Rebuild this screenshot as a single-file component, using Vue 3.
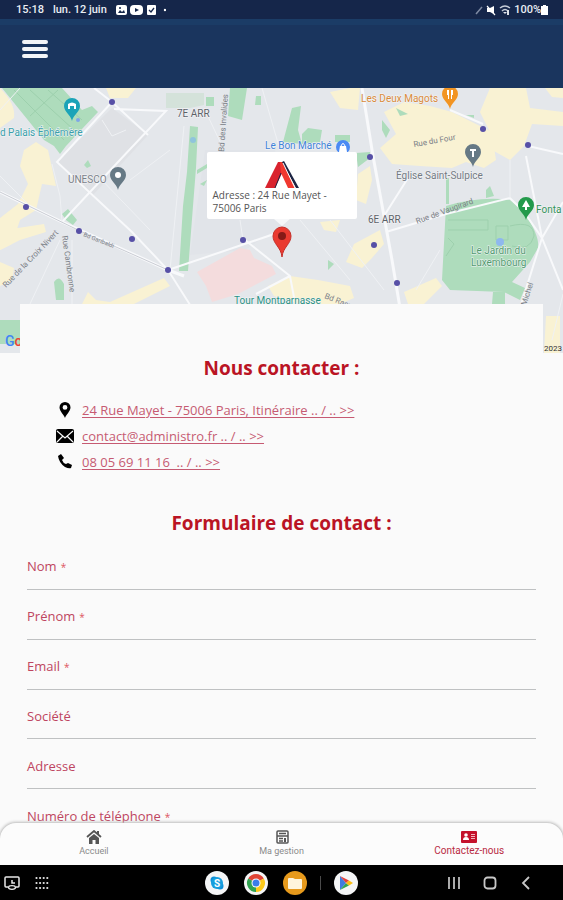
<template>
  <div class="screen">
    <div class="status-bar">
      <span>15:18</span>
      <span class="status-date">lun. 12 juin</span>
      <svg width="50" height="12" viewBox="0 0 50 12" aria-hidden="true">
        <rect x="0" y="1" width="11" height="10" rx="2" fill="#fff" />
        <path d="M2 9 L4 6 L6 8 L8 6 L9 9Z" fill="#15264a" />
        <circle cx="4" cy="4" r="1" fill="#15264a" />
        <rect x="14" y="1" width="13" height="10" rx="4" fill="#fff" />
        <path d="M19 4 L23 6 L19 8Z" fill="#15264a" />
        <rect x="31" y="1" width="9" height="10" rx="1" fill="#fff" />
        <path d="M33 6 L35 8 L38 4" fill="none" stroke="#15264a" stroke-width="1.3" />
        <circle cx="49" cy="6" r="1.2" fill="#fff" />
      </svg>
      <span class="status-space"></span>
      <svg width="38" height="12" viewBox="0 0 38 12" aria-hidden="true">
        <path d="M2 10 L8 3" stroke="#7f8ba3" stroke-width="1.5" />
        <path d="M13 4 H16 L20 2 V10 L16 8 H13Z" fill="#fff" />
        <path d="M13 2 L21 11" stroke="#fff" stroke-width="1.2" />
        <path d="M26 4 Q31 0 36 4 M28 7 Q31 4 34 7" fill="none" stroke="#c5ccd8" stroke-width="1.5" />
        <path d="M29 8 L31 10 L33 8Z M33 6 H35 V11 H33Z" fill="#dfe3ea" />
      </svg>
      <span class="status-battery">100%</span>
      <svg width="7" height="12" viewBox="0 0 7 12" aria-hidden="true">
        <path d="M2 1 H5 V2 H7 V11 H0 V2 H2Z" fill="#fff" />
      </svg>
    </div>

    <header class="app-header">
      <button class="menu-button" type="button" aria-label="Menu">
        <span></span>
        <span></span>
        <span></span>
      </button>
    </header>

    <main class="content">
      <section class="map">
        <svg class="map-canvas" viewBox="0 88 563 265" preserveAspectRatio="xMidYMid slice">
          <rect y="88" width="563" height="265" fill="#e4e7eb" />

          <g fill="#dfe1e5">
            <path d="M57 162 L112 108 L148 135 L92 196Z" />
            <path d="M205 150 L275 150 L290 220 L245 250 L190 255Z" fill="#e1e4e9" />
          </g>

          <g fill="#f9f2d3">
            <path d="M0 88 Q16 104 14 118 L0 128Z M24 150 L36 142 L48 150 L56 186 L42 184 L36 210 L20 220 L12 244 L0 250 V218 L18 204 L28 184 L20 166Z" />
            <path d="M0 222 L18 228 L44 224 L46 232 L20 240 L0 250Z M0 262 L14 268 L12 280 L0 286Z" />
            <path d="M106 88 H136 L128 98 L110 98Z M82 304 L88 292 L96 300 L110 302 L164 278 L170 286 L134 304Z" />
            <path d="M330 92 L350 88 H360 L358 110 L340 108Z M384 112 L404 102 L430 106 L452 112 L484 128 L492 132 L496 160 L484 168 L466 162 L452 168 L420 166 L392 164 L380 148 L396 134Z" />
            <path d="M490 88 H526 L530 108 L563 112 V126 L532 124 L524 146 L510 160 L492 150 L490 132 L480 112Z M545 88 H563 V98 L552 97Z" />
            <path d="M358 174 L370 166 L372 180 L366 204 L356 200Z M320 222 L340 220 L336 232 L324 230Z M354 244 L380 230 L384 244 L372 258 L362 268 L346 262Z" />
            <path d="M268 286 L290 276 L318 280 L350 286 L354 298 L340 304 H300 L274 296Z M404 292 L436 278 L442 286 L424 304 H408Z M546 316 H560 V353 H544Z" />
          </g>

          <path d="M197 272 L240 248 L250 250 L254 258 L272 266 L276 274 L238 294 L212 302 L206 286Z" fill="#f4dcdd" />

          <g fill="#aedcbc">
            <path d="M2 88 H62 L82 110 L92 106 L98 112 L66 146 L60 154 L54 146 L44 140Z M84 165 L88 160 L91 166 L87 168Z" />
            <path d="M190 126 L198 127 L196 168 L193 206 L188 271 L179 271 L183 206 L187 172Z" />
            <path d="M230 88 H247 L242 120 L228 116Z M206 97 H214 V106 H206Z M256 96 H261 V105 H255Z M292 108 L301 106 L298 130 L302 144 L283 142Z" />
            <path d="M302 134 L308 128 L322 130 L320 142 L302 144Z M335 135 H350 V142 H335Z" />
            <path d="M62 214 L68 209 L77 220 L73 225 L66 220Z M54 282 Q59 274 64 284 V300 H56Z M0 320 H20 V344 H0Z" />
            <path d="M197 170 L207 164 V168 L197 174Z M200 184 L207 180 L204 186Z M356 153 L370 152 V158 L358 167Z M328 260 L334 264 L328 270Z" />
            <path d="M382 120 L390 130 L386 138 L382 130Z M396 108 L408 114 L400 116Z M486 198 V190 L490 186 L494 196Z M446 178 H449 V204 H446Z M466 115 H474 V118Z" />
            <path d="M446 206 Q480 196 510 200 L524 212 Q540 236 538 248 L530 262 L512 282 L525 288 L520 300 L504 292 L450 290 L442 280Z M493 292 H505 V304 H492Z" />
          </g>
          <path d="M166 93 H204 V105 L190 108 H166Z" fill="#d4e2da" />

          <g fill="none" stroke="#9dd0ad" stroke-width="1">
            <path d="M14 90 L64 140 M30 90 L74 130 M48 90 L82 120 M30 116 L58 90" />
            <path d="M448 220 H488 V230 H448 M448 238 L454 244 L446 256 M496 226 H508 V240 H496Z M510 226 Q534 220 534 236 Q530 252 512 246" />
          </g>

          <g fill="none" stroke="#f8f9fb" stroke-width="2">
            <path d="M94 88 L112 102 L148 135 M112 102 L57 162 L132 232 L168 270 L192 308 M114 109 L166 111 L118 162 L62 222" />
            <path d="M0 192 L62 222 L80 230 L168 270 L184 276" stroke-width="3" />
            <path d="M168 270 L280 232 M245 240 L290 276 L296 308 M290 276 L256 294" />
            <path d="M362 88 L373 156 L384 216 L392 260 L400 308" stroke-width="3" />
            <path d="M384 216 L408 178 M386 232 L446 214 L510 198 L524 212 L542 238 L520 308" />
            <path d="M450 110 L483 124 M528 146 L563 154 M526 156 L542 238 L563 290 M563 202 L542 238" />
          </g>
          <g fill="none" stroke="#eff1f4" stroke-width="1">
            <path d="M52 164 L60 196 L62 222 M30 304 L60 240 M72 240 L72 304 M102 120 L112 136 L126 130 M96 174 L150 230" />
            <path d="M204 108 L224 150 M262 88 L280 150 M240 220 L243 240 M300 220 L350 280 M330 220 L384 290 M416 290 L440 250" />
            <path d="M510 160 V198 M20 88 L0 110 M0 176 L30 206 M130 180 L170 150 M184 126 L170 270 M563 294 L552 340" />
          </g>
          <path d="M0 192 L80 231 L168 270" fill="none" stroke="#c9ccd3" stroke-width="1" />

          <g fill="#5750a6">
            <circle v-for="stop in metroStops" :key="stop.join('-')" :cx="stop[0]" :cy="stop[1]" r="3" />
          </g>
          <circle cx="500" cy="242" r="4" fill="#8fb8ee" />
          <circle cx="193" cy="140" r="3" fill="#8fc4dc" />
          <circle cx="78" cy="120" r="2" fill="#7fa6e8" />

          <g v-for="pin in pins" :key="pin.x" :transform="`translate(${pin.x} ${pin.y})`">
            <path d="M0 12 C-1 6 -8 3 -8 -3 A8 8 0 0 1 8 -3 C8 3 1 6 0 12Z" :fill="pin.color" />
            <path :d="pin.glyph" fill="#fff" />
          </g>
          <circle cx="343" cy="147" r="7" fill="#4a8af4" />
          <path d="M340 146 H346 L347 152 H339Z" fill="#fff" />
          <path d="M341 146 Q343 141 345 146" fill="none" stroke="#fff" stroke-width="1" />

          <g class="map-label">
            <text x="177" y="117">7E ARR</text>
            <text x="368" y="223">6E ARR</text>
            <text x="68" y="183" fill="#7a8088">UNESCO</text>
            <text x="396" y="179" fill="#737a83">Église Saint-Sulpice</text>
            <text x="0" y="136" fill="#3a9fab">d Palais Éphémère</text>
            <text x="361" y="102" fill="#d98b3a">Les Deux Magots</text>
            <text x="265" y="149" fill="#3f83d8">Le Bon Marché</text>
            <text x="234" y="304" fill="#2b9184">Tour Montparnasse</text>
            <text x="536" y="213" fill="#34925a">Fonta</text>
            <text x="471" y="254" fill="#4f9a6e">Le Jardin du</text>
            <text x="471" y="266" fill="#4f9a6e">Luxembourg</text>
          </g>
          <g class="street-label">
            <text transform="translate(6 288) rotate(-46)">Rue de la Croix Nivert</text>
            <text transform="translate(62 236) rotate(82)">Rue Cambronne</text>
            <text transform="translate(83 236) rotate(22)" class="street-small">Bd Garibaldi</text>
            <text transform="translate(224 152) rotate(-86)">Bd des Invalides</text>
            <text transform="translate(414 147) rotate(-10)">Rue du Four</text>
            <text transform="translate(417 224) rotate(-20)">Rue de Vaugirard</text>
            <text transform="translate(324 298) rotate(22)">Bd Raspail</text>
            <text transform="translate(526 306) rotate(-72)">Michel</text>
          </g>

          <text class="map-brand" x="5" y="346">
            <tspan fill="#4285f4">G</tspan><tspan fill="#ea4335">o</tspan>
          </text>
          <text class="map-credit" x="562" y="351" text-anchor="end">2023</text>
        </svg>

        <div class="map-marker">
          <div class="info-window">
            <svg width="36" height="29" viewBox="0 0 36 29" aria-hidden="true">
              <path d="M1 28 L14 2 L20 2 L21 7 L11 28Z" fill="#d9232e" />
              <path d="M16 2 L19 2 L31 28 H24 L17 13Z" fill="#f0382f" />
              <path d="M20 1 L35 28 L32 28 L18 2Z" fill="#1c2443" />
              <path d="M19 3 L31 28" stroke="#fff" stroke-width="1" />
              <path d="M17 13 L11 28" stroke="#1c2443" stroke-width="1" />
            </svg>
            <p>Adresse : 24 Rue Mayet - 75006 Paris</p>
          </div>
          <svg width="20" height="39" viewBox="0 0 20 39" aria-hidden="true">
            <path d="M2 0 H18 L10 7Z" fill="#fff" fill-opacity="0.7" />
            <path d="M10 38 C9 28 1 25 1 17 A9 9 0 0 1 19 17 C19 25 11 28 10 38Z" fill="#ea3a30" stroke="#c5302a" />
            <circle cx="10" cy="17" r="4" fill="#851a17" />
          </svg>
        </div>
      </section>

      <section class="contact-card">
        <h2>Nous contacter :</h2>
        <ul class="contact-list">
          <li>
            <svg width="18" height="18" viewBox="0 0 18 18" aria-hidden="true">
              <path fill-rule="evenodd" d="M9 1 A5.5 5.5 0 0 1 14.5 6.5 C14.5 10 10 14 9 17 C8 14 3.5 10 3.5 6.5 A5.5 5.5 0 0 1 9 1Z M9 4 A2.3 2.3 0 1 0 9 8.8 A2.3 2.3 0 1 0 9 4Z" />
            </svg>
            <a href="#itineraire">24 Rue Mayet - 75006 Paris, Itinéraire .. / .. &gt;&gt;</a>
          </li>
          <li>
            <svg width="18" height="18" viewBox="0 0 18 18" aria-hidden="true">
              <rect x="0" y="2" width="18" height="14" rx="2" />
              <path d="M1 4 L9 11 L17 4 M1 15 L7 9 M17 15 L11 9" fill="none" stroke="#fafafa" stroke-width="1.2" />
            </svg>
            <a href="mailto:contact@administro.fr">contact@administro.fr .. / .. &gt;&gt;</a>
          </li>
          <li>
            <svg width="18" height="18" viewBox="0 0 18 18" aria-hidden="true">
              <path d="M2 3 L5 1 L8 5 L6 7 Q7 10 10 11 L12 10 L16 12 L15 15 Q13 16 9 14 Q3 10 2 3Z" />
            </svg>
            <a href="tel:0805691116">08 05 69 11 16&nbsp; .. / .. &gt;&gt;</a>
          </li>
        </ul>
      </section>

      <form class="contact-form" @submit.prevent>
        <h2>Formulaire de contact :</h2>
        <div v-for="field in fields" :key="field.name" class="field">
          <label :for="field.name">
            {{ field.label }}<span v-if="field.required" class="required">*</span>
          </label>
          <input
            :id="field.name"
            v-model="form[field.name]"
            :type="field.type"
            :name="field.name"
            :required="field.required"
          />
        </div>
      </form>
    </main>

    <nav class="tab-bar">
      <a href="#accueil">
        <svg width="16" height="14" viewBox="0 0 16 14" aria-hidden="true">
          <path d="M1 7 L8 1 L15 7" fill="none" stroke="#555" stroke-width="1.8" />
          <path d="M3 8 L8 4 L13 8 V14 H9.5 V10 H6.5 V14 H3Z M11 1 H13 V5 L11 3Z" fill="#555" />
        </svg>
        Accueil
      </a>
      <a href="#gestion">
        <svg width="16" height="14" viewBox="0 0 16 14" aria-hidden="true">
          <rect x="3" y="1" width="11" height="12" rx="1" fill="none" stroke="#555" stroke-width="1.5" />
          <path d="M3 6 H14 M5 3.5 H12 M5 8.5 H9 M5 11 H9" stroke="#555" stroke-width="1.3" />
          <path d="M10 8 H12 V12 H10Z" fill="#555" />
        </svg>
        Ma gestion
      </a>
      <a href="#contact" class="active">
        <svg width="16" height="14" viewBox="0 0 16 14" aria-hidden="true">
          <rect x="0" y="1" width="16" height="12" rx="1" fill="#c4122b" />
          <circle cx="5" cy="5" r="1.8" fill="#fff" />
          <path d="M2 10 Q2 7 5 7 Q8 7 8 10Z" fill="#fff" />
          <path d="M10 4.5 H14 M10 6.5 H14 M10 8.5 H14" stroke="#f3b5bd" stroke-width="1" />
        </svg>
        Contactez-nous
      </a>
    </nav>

    <div class="system-bar">
      <div class="system-group system-left">
        <button type="button" aria-label="Bureau">
          <svg width="16" height="16" viewBox="0 0 16 16" aria-hidden="true">
            <path d="M4 12 H2 Q1 12 1 11 V3 Q1 2 2 2 H14 Q15 2 15 3 V11 Q15 12 14 12 H12 M8 5 V8 H11" fill="none" stroke="#e8e8e8" stroke-width="1.5" />
            <ellipse cx="8" cy="12.5" rx="3.5" ry="1.8" fill="none" stroke="#e8e8e8" stroke-width="1.3" />
          </svg>
        </button>
        <button type="button" aria-label="Applications">
          <svg width="14" height="14" viewBox="0 0 14 14" aria-hidden="true">
            <circle v-for="n in 12" :key="n" :cx="1.5 + ((n - 1) % 4) * 3.6" :cy="2 + Math.floor((n - 1) / 4) * 5" r="1.1" fill="#e8e8e8" />
          </svg>
        </button>
      </div>
      <div class="system-group system-apps">
        <button type="button" class="app-icon" aria-label="Skype">
          <svg width="24" height="24" viewBox="0 0 24 24">
            <circle cx="9" cy="9" r="3.5" fill="#0d8fd8" />
            <circle cx="15" cy="15" r="3.5" fill="#0d8fd8" />
            <circle cx="12" cy="12" r="6" fill="#169ede" />
            <text x="12" y="16" text-anchor="middle" class="skype-letter">S</text>
          </svg>
        </button>
        <button type="button" class="app-icon" aria-label="Chrome">
          <svg width="24" height="24" viewBox="0 0 24 24">
            <path d="M12 12 L4.2 7.5 A9 9 0 0 1 19.8 7.5Z" fill="#e04436" />
            <path d="M12 12 L19.8 7.5 A9 9 0 0 1 12 21Z" fill="#fbc91a" />
            <path d="M12 12 L12 21 A9 9 0 0 1 4.2 7.5Z" fill="#31a350" />
            <circle cx="12" cy="12" r="4.5" fill="#fff" />
            <circle cx="12" cy="12" r="3.5" fill="#3b7de8" />
          </svg>
        </button>
        <button type="button" class="app-icon app-files" aria-label="Mes fichiers">
          <svg width="24" height="24" viewBox="0 0 24 24">
            <path d="M5 8 Q5 7 6 7 H10 L12 8 H18 Q19 8 19 9 V17 Q19 18 18 18 H6 Q5 18 5 17Z" fill="#fff5dc" />
          </svg>
        </button>
        <span class="divider"></span>
        <button type="button" class="app-icon" aria-label="Play Store">
          <svg width="24" height="24" viewBox="0 0 24 24">
            <path d="M6 5 V19 L12 12Z" fill="#3f7be0" />
            <path d="M6 5 L15 9.5 L12 12Z" fill="#e3403a" />
            <path d="M6 19 L15 14.5 L12 12Z" fill="#2fa454" />
            <path d="M15 9.5 L19 12 L15 14.5 L12 12Z" fill="#fabd14" />
          </svg>
        </button>
      </div>
      <div class="system-group system-nav">
        <button type="button" aria-label="Récents">
          <svg width="14" height="14" viewBox="0 0 14 14">
            <path d="M2 1 V13 M7 1 V13 M12 1 V13" stroke="#bdbdbd" stroke-width="1.8" />
          </svg>
        </button>
        <button type="button" aria-label="Écran d'accueil">
          <svg width="14" height="14" viewBox="0 0 14 14">
            <rect x="1.5" y="1.5" width="11" height="11" rx="3" fill="none" stroke="#c8c8c8" stroke-width="1.8" />
          </svg>
        </button>
        <button type="button" aria-label="Retour">
          <svg width="14" height="14" viewBox="0 0 14 14">
            <path d="M10 1 L4 7 L10 13" fill="none" stroke="#c8c8c8" stroke-width="1.8" />
          </svg>
        </button>
      </div>
    </div>
  </div>
</template>

<script setup>
import { reactive } from 'vue'

const fields = [
  { name: 'nom', label: 'Nom', type: 'text', required: true },
  { name: 'prenom', label: 'Prénom', type: 'text', required: true },
  { name: 'email', label: 'Email', type: 'email', required: true },
  { name: 'societe', label: 'Société', type: 'text', required: false },
  { name: 'adresse', label: 'Adresse', type: 'text', required: false },
  { name: 'telephone', label: 'Numéro de téléphone', type: 'tel', required: true }
]

const form = reactive({
  nom: '',
  prenom: '',
  email: '',
  societe: '',
  adresse: '',
  telephone: ''
})

const metroStops = [
  [112, 102], [26, 207], [79, 231], [132, 239], [168, 270], [243, 240],
  [370, 157], [483, 129], [528, 145], [374, 245], [397, 283]
]

const pins = [
  { x: 72, y: 109, color: '#1ba3b8', glyph: 'M-4 0 V-5 Q0 -8 4 -5 V0 H2 V-3 H-2 V0Z' },
  { x: 118, y: 178, color: '#667985', glyph: 'M-3 -3 A3 3 0 0 1 3 -3 A3 3 0 0 1 -3 -3Z' },
  { x: 450, y: 97, color: '#f29422', glyph: 'M-3 -7 H-1 V2 H-2 V-2 H-3Z M1 -7 H3 V-2 H2 V2 H1Z' },
  { x: 473, y: 155, color: '#667985', glyph: 'M-3 -6 H3 V-4 H1 V2 H-1 V-4 H-3Z' },
  { x: 526, y: 208, color: '#239a4b', glyph: 'M0 -8 L4 -1 H1 V2 H-1 V-1 H-4Z' }
]
</script>

<style>
body {
  background: #fafafa;
}
</style>

<style scoped>
.screen {
  display: flex;
  flex-direction: column;
  height: 100vh;
  overflow: hidden;
  background: #fafafa;
  font-family: "Open Sans", "Noto Sans", sans-serif;
}

button {
  display: flex;
  padding: 0;
  border: none;
  background: none;
  cursor: pointer;
}

.status-bar {
  display: flex;
  flex: none;
  align-items: center;
  height: 19px;
  padding: 0 15px 0 16px;
  background: #15264a;
  color: #e9edf3;
  font-family: Roboto, sans-serif;
  font-size: 11px;
  font-weight: 500;
}

.status-date {
  margin: 0 9px;
}

.status-space {
  flex: 1;
}

.status-battery {
  margin-left: 2px;
}

.app-header {
  display: flex;
  flex: none;
  align-items: center;
  height: 69px;
  padding: 0 22px 16px;
  box-sizing: border-box;
  background: #1a355e;
  border-top: 6px solid #1b3c66;
}

.menu-button {
  flex-direction: column;
  gap: 3px;
}

.menu-button span {
  width: 26px;
  height: 4px;
  border-radius: 2px;
  background: #f3f5f8;
}

.content {
  flex: 1;
  min-height: 0;
  overflow: hidden;
}

.map {
  position: relative;
  height: 265px;
}

.map-canvas {
  display: block;
  width: 100%;
  height: 100%;
}

.map-label {
  font-family: Roboto, sans-serif;
  font-size: 10px;
  fill: #5c6168;
  stroke: #f4f5f7;
  stroke-width: 1px;
  paint-order: stroke;
}

.street-label {
  font-family: Roboto, sans-serif;
  font-size: 8px;
  fill: #7b8087;
}

.street-small {
  font-size: 6px;
}

.map-brand {
  font-family: Roboto, sans-serif;
  font-size: 14px;
  font-weight: 500;
}

.map-credit {
  font-family: Roboto, sans-serif;
  font-size: 8px;
  fill: #333;
}

/* Info window and its pin, laid over the map */
.map-marker {
  position: absolute;
  top: 64px;
  left: 0;
  right: 0;
  display: flex;
  flex-direction: column;
  align-items: center;
}

.info-window {
  display: flex;
  flex-direction: column;
  align-items: center;
  width: 150px;
  height: 67px;
  padding: 8px 6px 0;
  box-sizing: border-box;
  border-radius: 2px;
  background: #fff;
}

.info-window p {
  width: 100%;
  margin: 0;
  color: #555;
  font-size: 10px;
  line-height: 13px;
}

.contact-card {
  position: relative;
  margin: -49px 20px 0;
  padding: 51px 36px 0;
  background: #fafafa;
}

h2 {
  margin: 0;
  color: #ba1424;
  font-size: 19px;
  font-weight: 700;
  line-height: 26px;
  text-align: center;
}

.contact-list {
  margin: 0;
  padding: 16px 0 0;
  list-style: none;
}

.contact-list li {
  display: flex;
  align-items: center;
  gap: 8px;
  height: 26px;
}

.contact-list a {
  color: #c65a72;
  font-size: 13px;
  line-height: 18px;
  text-decoration: underline;
  text-underline-offset: 2px;
}

.contact-form {
  padding: 35px 27px 0;
}

.contact-form h2 {
  margin-bottom: 4px;
}

.field {
  display: flex;
  flex-direction: column;
  height: 50px;
  padding-top: 17px;
  box-sizing: border-box;
}

.field label {
  color: #be4560;
  font-size: 13px;
  line-height: 18px;
}

.required {
  margin-left: 4px;
  color: #dd5560;
  font-size: 10px;
}

.field input {
  width: 100%;
  height: 14px;
  padding: 0;
  box-sizing: border-box;
  border: none;
  border-bottom: 1px solid #bfc1c2;
  background: transparent;
  font-family: inherit;
  font-size: 12px;
  outline: none;
}

.field input:focus {
  border-bottom-color: #b93a58;
}

.tab-bar {
  position: relative;
  display: flex;
  flex: none;
  height: 42px;
  border-radius: 16px 16px 0 0;
  background: #fcfcfc;
  box-shadow: 0 0 3px 1px #bbb;
}

.tab-bar a {
  display: flex;
  flex: 1;
  flex-direction: column;
  align-items: center;
  padding-top: 7px;
  color: #8a8a8a;
  font-family: Roboto, sans-serif;
  font-size: 9px;
  line-height: 14px;
  text-decoration: none;
}

.tab-bar a.active {
  color: #b92a43;
  font-size: 10px;
}

.system-bar {
  position: relative;
  display: grid;
  grid-template-columns: 1fr auto 1fr;
  flex: none;
  align-items: center;
  height: 35px;
  background: #000;
}

.system-group {
  display: flex;
  align-items: center;
}

.system-left {
  gap: 15px;
  padding-left: 4px;
}

.system-apps {
  gap: 15px;
}

.system-nav {
  justify-content: flex-end;
  gap: 22px;
  padding-right: 30px;
}

.app-icon {
  border-radius: 50%;
  background: #f4f5f6;
}

.app-files {
  background: #e79a1c;
}

.skype-letter {
  fill: #fff;
  font-family: Roboto, sans-serif;
  font-size: 10px;
  font-weight: 700;
}

.divider {
  width: 1px;
  height: 14px;
  margin: 0 -2px;
  background: #4a4a4a;
}
</style>
